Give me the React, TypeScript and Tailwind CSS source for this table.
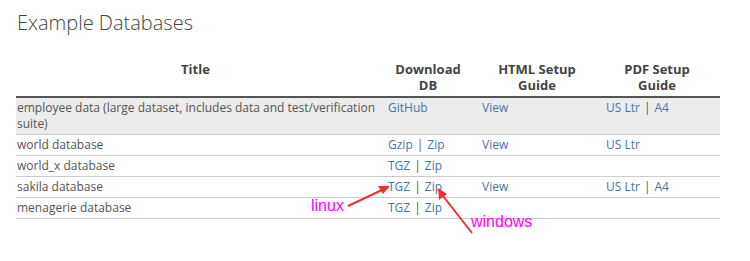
const rows = [
  {
    title: "employee data (large dataset, includes data and test/verification suite)",
    db: ["GitHub"],
    html: "View",
    pdf: ["US Ltr", "A4"],
    shaded: true,
  },
  { title: "world database", db: ["Gzip", "Zip"], html: "View", pdf: ["US Ltr"] },
  { title: "world_x database", db: ["TGZ", "Zip"], html: "", pdf: [] },
  { title: "sakila database", db: ["TGZ", "Zip"], html: "View", pdf: ["US Ltr", "A4"] },
  { title: "menagerie database", db: ["TGZ", "Zip"], html: "", pdf: [] },
];

const Links = ({ items }: { items: string[] }) => (
  <>
    {items.map((t, i) => (
      <span key={t}>
        {i > 0 && <span className="text-[#555] px-[4px]">|</span>}
        <a className="text-[#4a74a5]">{t}</a>
      </span>
    ))}
  </>
);

export default function App() {
  return (
    <div className="relative w-[750px] h-[261px] overflow-hidden bg-white font-['Open_Sans',sans-serif] text-[#555]">
      <h2 className="pl-[17px] pt-[11px] text-[20px] leading-[24px] font-light text-[#444]">
        Example Databases
      </h2>
      <table className="ml-[16px] mt-[24px] w-[704px] border-collapse table-fixed">
        <colgroup>
          <col className="w-[370px]" />
          <col className="w-[94px]" />
          <col className="w-[124px]" />
          <col className="w-[116px]" />
        </colgroup>
        <thead>
          <tr className="border-b-2 border-[#555] text-[13px] leading-[16px] font-bold text-[#444]">
            <th className="align-top pl-[1px] pr-[12px] pt-[2px] pb-[3px] text-center">Title</th>
            <th className="align-top pl-[2px] pr-[12px] pt-[2px] pb-[3px] text-center">Download DB</th>
            <th className="align-top pl-[2px] pr-[12px] pt-[2px] pb-[3px] text-center">HTML Setup Guide</th>
            <th className="align-top pl-[2px] pr-[12px] pt-[2px] pb-[3px] text-center">PDF Setup Guide</th>
          </tr>
        </thead>
        <tbody className="text-[12px] leading-[16px]">
          {rows.map((r) => (
            <tr key={r.title} className={`border-b border-[#ccc] ${r.shaded ? "bg-[#ececec]" : ""}`}>
              <td className="align-top pl-[1px] pr-[2px] py-[2px]">{r.title}</td>
              <td className="align-top pl-[2px] py-[2px]"><Links items={r.db} /></td>
              <td className="align-top pl-[2px] py-[2px]">{r.html && <a className="text-[#4a74a5]">{r.html}</a>}</td>
              <td className="align-top pl-[2px] py-[2px]"><Links items={r.pdf} /></td>
            </tr>
          ))}
        </tbody>
      </table>

      {/* screenshot annotations */}
      <span className="absolute left-[311px] top-[196px] text-[16px] leading-[20px] text-[#ff00ff] font-['Liberation_Sans',sans-serif]">linux</span>
      <span className="absolute left-[471px] top-[212px] text-[16px] leading-[20px] text-[#ff00ff] font-['Liberation_Sans',sans-serif]">windows</span>
      <svg className="absolute left-0 top-0" width="750" height="261">
        <line x1="348" y1="206" x2="382" y2="190" stroke="#f03030" strokeWidth="2" />
        <polygon points="390,186 378,186 383,194" fill="#f03030" />
        <line x1="472" y1="233" x2="443" y2="196" stroke="#f03030" strokeWidth="2" />
        <polygon points="438,188 439,200 447,194" fill="#f03030" />
      </svg>
    </div>
  );
}
